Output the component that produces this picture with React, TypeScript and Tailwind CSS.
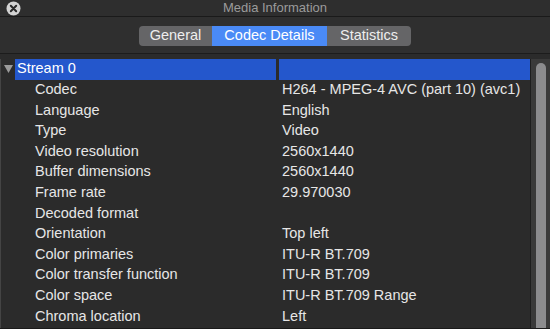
import React from "react";

const rows: [string, string][] = [
  ["Codec", "H264 - MPEG-4 AVC (part 10) (avc1)"],
  ["Language", "English"],
  ["Type", "Video"],
  ["Video resolution", "2560x1440"],
  ["Buffer dimensions", "2560x1440"],
  ["Frame rate", "29.970030"],
  ["Decoded format", ""],
  ["Orientation", "Top left"],
  ["Color primaries", "ITU-R BT.709"],
  ["Color transfer function", "ITU-R BT.709"],
  ["Color space", "ITU-R BT.709 Range"],
  ["Chroma location", "Left"],
];

function CloseIcon() {
  return (
    <svg width="15" height="15" viewBox="0 0 15 15">
      <circle cx="7.5" cy="7.5" r="7" fill="#d4d4d4" />
      <path d="M4.8 4.8 L10.2 10.2 M10.2 4.8 L4.8 10.2" stroke="#2a2a2a" strokeWidth="2" strokeLinecap="round" />
    </svg>
  );
}

export default function App() {
  return (
    <div
      className="flex h-[329px] w-[550px] flex-col overflow-hidden bg-[#2b2b2b] text-[#e6e6e6]"
      style={{ fontFamily: '"Liberation Sans", Arial, sans-serif' }}
    >
      <div className="relative flex h-[17px] items-center justify-center border-b border-[#1a1a1a] bg-[#2e2e2e]">
        <div className="absolute left-[6px] top-[1px]">
          <CloseIcon />
        </div>
        <span className="text-[13px] text-[#9b9b9b]">Media Information</span>
      </div>

      <div className="flex h-[37px] items-center justify-center border-b border-[#1c1c1c] bg-[#2f2f2f] pt-[1px]">
        <div className="flex h-[20px] overflow-hidden rounded-[4px] text-[14.5px] text-[#eeeeee]">
          <div className="flex w-[73px] items-center justify-center bg-[#656567]">General</div>
          <div className="flex w-[115px] items-center justify-center bg-[#4a8af6] text-white">Codec Details</div>
          <div className="flex w-[84px] items-center justify-center bg-[#656567]">Statistics</div>
        </div>
      </div>

      <div className="flex flex-1 border-b border-[#1a1a1a] pt-[5px]">
        <div className="flex flex-1 flex-col border-l border-[#444]">
          <div className="flex h-[20.6px] items-center text-[14.5px] text-white">
            <div className="flex w-[14px] items-center justify-center">
              <svg width="9" height="8" viewBox="0 0 9 8">
                <path d="M0 0 H9 L4.5 8 Z" fill="#9a9a9a" />
              </svg>
            </div>
            <div className="flex h-full w-[261px] items-center bg-[#2457cc] pl-[2px]">Stream 0</div>
            <div className="h-full w-[3px]" />
            <div className="h-full flex-1 bg-[#2457cc]" />
          </div>
          {rows.map(([label, value]) => (
            <div key={label} className="flex h-[20.6px] items-center text-[14.5px]">
              <div className="w-[278px] pl-[34px]">{label}</div>
              <div className="flex-1 pl-[3px]">{value}</div>
            </div>
          ))}
        </div>
        <div className="flex w-[20px] justify-center border-l border-[#1e1e1e] bg-[#3a3a3a] pt-[4px]">
          <div className="w-[10px] rounded-t-full bg-[#8c8c8e]" />
        </div>
      </div>
    </div>
  );
}
